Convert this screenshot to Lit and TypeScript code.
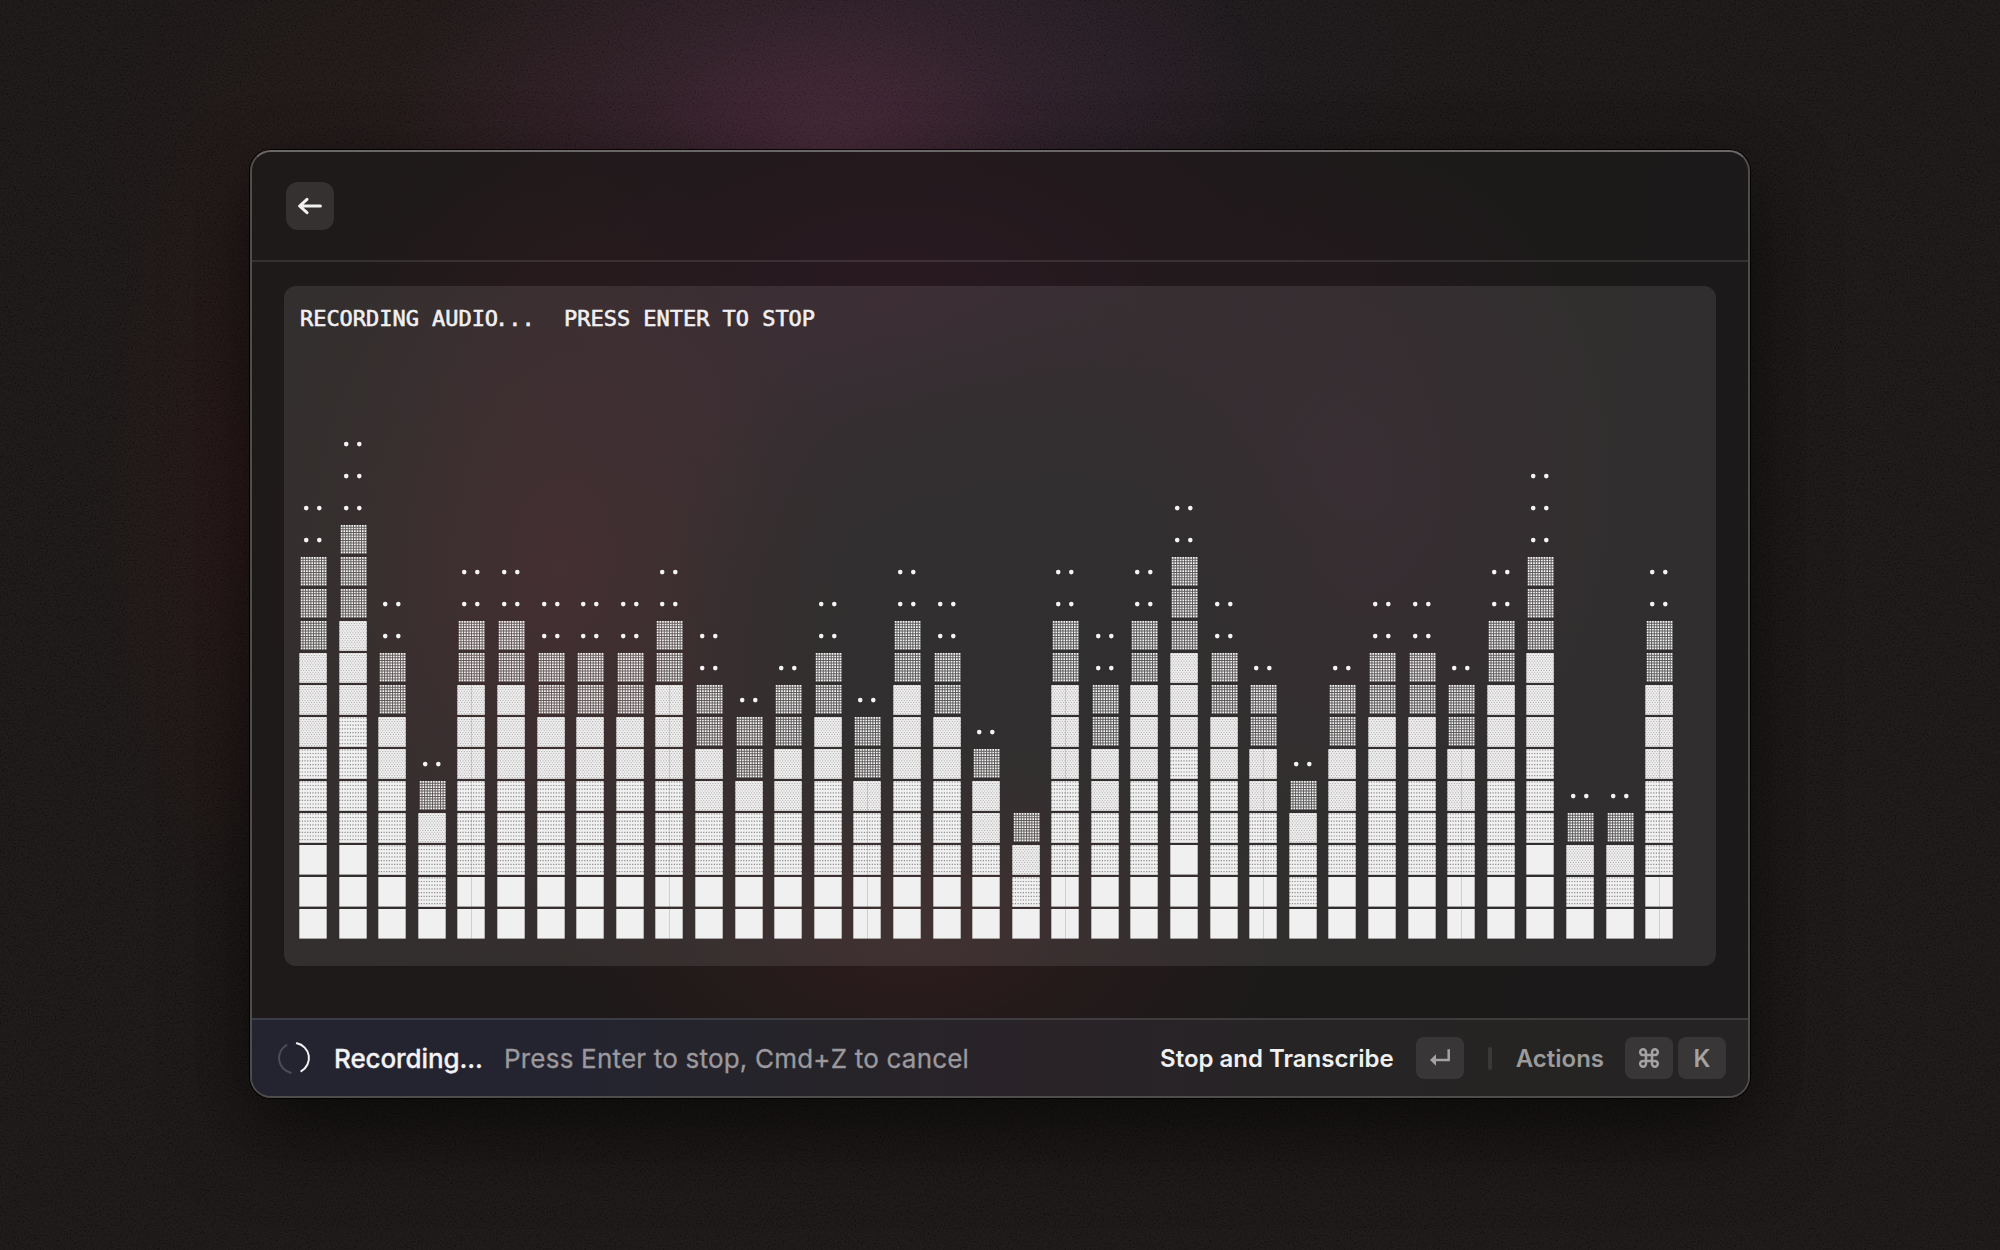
import { LitElement, html, css, svg, nothing } from "lit";
import { customElement, property } from "lit/decorators.js";

const LEVELS = [
  14, 16, 11, 6, 12, 12, 11, 11, 11, 12, 10, 8, 9, 11, 8, 12, 11, 7, 4, 12, 10,
  12, 14, 11, 9, 6, 9, 11, 11, 9, 12, 15, 5, 5, 12,
];

/** Shade of the cell at a height, counted from the bottom of its column. */
function shade(index: number, level: number): string {
  if (index < Math.ceil(level * 0.15)) return "full";
  if (index < Math.ceil(level * 0.4)) return "dense";
  if (index < Math.ceil(level * 0.6)) return "medium";
  if (index < Math.ceil(level * 0.8)) return "light";
  return "dots";
}

/** Path of small squares on a regular grid; odd rows are moved by `shift`. */
function dotGrid(
  x0: number, y0: number, x1: number, y1: number,
  dx: number, dy: number, size: number, shift = 0,
): string {
  let d = "";
  let row = 0;
  for (let y = y0; y < y1 - 0.5; y += dy, row++) {
    for (let x = x0 + (row % 2 ? shift : 0); x < x1 - 0.5; x += dx) {
      d += `M${x.toFixed(2)} ${y.toFixed(2)}h${size}v${size}h-${size}z`;
    }
  }
  return d;
}

const LIGHT = dotGrid(1.8, 0, 27.8, 29, 2.65, 2.65, 1.65);
const MEDIUM = dotGrid(0.2, 0.2, 27.8, 29.8, 2.65, 1.85, 1.1, 1.32);
const DENSE = dotGrid(0.2, 0.2, 27.8, 29.8, 2.65, 3.7, 1.2);

@customElement("level-column")
class LevelColumn extends LitElement {
  @property({ type: Number }) level = 0;
  @property({ type: Number }) seam = 0;

  static styles = css`
    :host {
      display: flex;
      flex-direction: column-reverse;
      width: 28px;
    }
    .cell {
      height: 30px;
      margin-bottom: 2px;
      flex: none;
    }
    svg {
      display: block;
    }
  `;

  render() {
    return Array.from({ length: this.level }, (_, i) => {
      const kind = shade(i, this.level);
      const seam =
        this.seam && kind !== "dots" && kind !== "light"
          ? svg`<rect x="14" y="0" width="1" height="30" fill="#5b5657" fill-opacity=${this.seam}/>`
          : nothing;
      return html`<div class="cell">
        <svg width="28" height="30" viewBox="0 0 28 30">${this.body(kind)}${seam}</svg>
      </div>`;
    });
  }

  private body(kind: string) {
    switch (kind) {
      case "dots":
        return svg`<circle cx="7.2" cy="15.1" r="2.3" fill="#f4f3f3"/><circle cx="20.3" cy="15.1" r="2.3" fill="#f4f3f3"/>`;
      case "light":
        return svg`<rect x="1.8" width="26" height="28.8" fill="#efeeee" fill-opacity=".24"/>
          <path d=${LIGHT} fill="#fbfafa" fill-opacity=".98"/>`;
      case "medium":
        return svg`<rect x="0.3" width="27.5" height="29.8" fill="#f3f2f2"/>
          <path d=${MEDIUM} fill="#4a4647" fill-opacity=".4"/>`;
      case "dense":
        return svg`<rect x="0.3" width="27.5" height="29.8" fill="#f1f0f0"/>
          <path d=${DENSE} fill="#4a4647" fill-opacity=".6"/>`;
      default:
        return svg`<rect x="0.3" width="27.4" height="29.6" fill="#f1f0f0"/>`;
    }
  }
}

@customElement("app-root")
class AppRoot extends LitElement {
  static styles = css`
    :host {
      display: block;
      font-family: Inter, "Liberation Sans", sans-serif;
    }
    .desktop {
      position: relative;
      width: 2000px;
      height: 1250px;
      overflow: hidden;
      display: flex;
      justify-content: center;
      box-sizing: border-box;
      padding-top: 150px;
      background:
        radial-gradient(440px 330px at 830px 150px, rgba(80, 42, 62, 0.76), rgba(68, 37, 57, 0.44) 45%, transparent),
        radial-gradient(360px 260px at 1130px 60px, rgba(34, 27, 44, 0.3), transparent),
        radial-gradient(380px 300px at 480px 170px, rgba(48, 24, 26, 0.4), transparent),
        radial-gradient(150px 420px at 250px 500px, rgba(52, 18, 20, 0.5), transparent),
        #171312;
    }
    .grain {
      position: absolute;
      inset: 0;
      opacity: 0.045;
    }
    .window {
      position: relative;
      width: 1500px;
      height: 948px;
      box-sizing: border-box;
      display: flex;
      flex-direction: column;
      border: 2px solid #4f4c4c;
      border-top-color: #6b6767;
      border-radius: 21px;
      overflow: hidden;
      background:
        radial-gradient(330px 300px at 760px 430px, rgba(27, 26, 26, 0.9), rgba(27, 26, 26, 0.65) 50%, transparent),
        radial-gradient(290px 420px at 310px 420px, rgba(52, 26, 29, 0.85), transparent),
        radial-gradient(360px 200px at 660px 780px, rgba(50, 28, 30, 0.8), transparent),
        radial-gradient(560px 330px at 650px 160px, rgba(43, 25, 34, 0.9), transparent),
        radial-gradient(250px 330px at 1110px 330px, rgba(43, 25, 34, 0.6), transparent),
        linear-gradient(100deg, #1e1a19, #1b1919);
      background-clip: padding-box;
      background-origin: border-box;
      box-shadow:
        0 0 0 1px rgba(0, 0, 0, 0.85),
        0 36px 80px rgba(0, 0, 0, 0.5),
        0 8px 60px rgba(0, 0, 0, 0.16);
    }
    .header {
      height: 110px;
      box-sizing: border-box;
      padding: 30px 0 0 34px;
      border-bottom: 2px solid rgba(255, 255, 255, 0.1);
      flex: none;
    }
    .back {
      width: 48px;
      height: 48px;
      border-radius: 12px;
      background: rgba(255, 255, 255, 0.1);
      display: flex;
      align-items: center;
      justify-content: center;
    }
    .content {
      flex: 1;
      padding: 24px 32px 0;
    }
    .panel {
      height: 680px;
      box-sizing: border-box;
      border-radius: 12px;
      background: rgba(255, 255, 255, 0.095);
      padding: 19px 16px 25px 15px;
      display: flex;
      flex-direction: column;
      justify-content: space-between;
    }
    .title {
      font: 22px/28px "DejaVu Sans Mono", monospace;
      letter-spacing: -0.04px;
      white-space: pre;
      color: #f1eff0;
      -webkit-text-stroke: 0.6px #f1eff0;
      padding-left: 1px;
    }
    .ellipsis {
      position: relative;
      left: -3px;
    }
    .levels {
      display: grid;
      grid-template-columns: repeat(35, 39.6px);
      align-items: end;
    }
    .footer {
      height: 78px;
      box-sizing: border-box;
      border-top: 2px solid rgba(255, 255, 255, 0.11);
      display: flex;
      align-items: center;
      padding: 0 22px 0 25px;
      background: linear-gradient(90deg, #242430, #242431 20%, #262429 38%, #292328 52%, #262425 72%, #252423 86%, #252324);
      flex: none;
      white-space: nowrap;
    }
    .status {
      margin-left: 23px;
      font-size: 26px;
      font-weight: 500;
      letter-spacing: -0.1px;
      color: #f3f2f4;
      width: 170px;
      -webkit-text-stroke: 0.3px #f3f2f4;
    }
    .hint {
      font-size: 26px;
      letter-spacing: 0.2px;
      color: #9b999d;
      -webkit-text-stroke: 0.3px #9b999d;
      flex: 1;
    }
    .action {
      font-size: 24px;
      font-weight: 600;
      color: #f1f0f1;
    }
    .muted {
      color: #9c9a9a;
    }
    .key {
      width: 48px;
      height: 42px;
      border-radius: 8px;
      background: #383637;
      color: #a4a2a2;
      display: flex;
      align-items: center;
      justify-content: center;
      font-size: 24px;
      font-weight: 600;
    }
    .enter {
      margin-left: 22px;
    }
    .divider {
      width: 4px;
      height: 23px;
      border-radius: 2px;
      background: #3a3838;
      margin: 0 24px;
    }
    .command {
      margin: 0 5px 0 21px;
    }
  `;

  render() {
    return html`<div class="desktop">
      <svg class="grain" width="2000" height="1250">
        <filter id="noise">
          <feTurbulence type="fractalNoise" baseFrequency="0.6" numOctaves="2" seed="4" />
          <feColorMatrix type="saturate" values="0" />
          <feComponentTransfer>
            <feFuncR type="linear" slope="2.8" intercept="-0.9" />
            <feFuncG type="linear" slope="2.8" intercept="-0.9" />
            <feFuncB type="linear" slope="2.8" intercept="-0.9" />
            <feFuncA type="linear" slope="0" intercept="1" />
          </feComponentTransfer>
        </filter>
        <rect width="2000" height="1250" filter="url(#noise)" />
      </svg>
      <div class="window">
        <div class="header">
          <div class="back">
            <svg width="28" height="24" viewBox="0 0 28 24" fill="none" stroke="#f2f1f1" stroke-width="3" stroke-linecap="round" stroke-linejoin="round">
              <path d="M24.4 12H3.6M11 5.3L3.6 12l7.4 6.7" />
            </svg>
          </div>
        </div>
        <div class="content">
          <div class="panel">
            <div class="title">RECORDING AUDIO<span class="ellipsis">...</span>  PRESS ENTER TO STOP</div>
            <div class="levels">
              ${LEVELS.map(
                (level, i) =>
                  html`<level-column .level=${level} .seam=${i % 5 === 4 ? 0.22 : 0}></level-column>`,
              )}
            </div>
          </div>
        </div>
        <div class="footer">
          <svg width="34" height="34" viewBox="0 0 34 34" fill="none" stroke-width="2" stroke-linecap="round">
            <path d="M19.8 2.3A15 15 0 0 1 24.3 30.1" stroke="#f4f3f5" />
            <path d="M13.8 31.7A15 15 0 0 1 9.4 4.1" stroke="#4d4c57" />
          </svg>
          <div class="status">Recording...</div>
          <div class="hint">Press Enter to stop, Cmd+Z to cancel</div>
          <div class="action">Stop and Transcribe</div>
          <div class="key enter">
            <svg width="24" height="20" viewBox="0 0 24 20">
              <path d="M20.7 1.3V12H7" fill="none" stroke="#a4a2a2" stroke-width="2.5" />
              <path d="M2 12L8 6.2V17.8Z" fill="#a4a2a2" />
            </svg>
          </div>
          <div class="divider"></div>
          <div class="action muted">Actions</div>
          <div class="key command">
            <svg width="22" height="22" viewBox="0 0 22 22" fill="none" stroke="#a4a2a2" stroke-width="2.5">
              <path d="M8 5.2A2.9 2.9 0 1 0 5.1 8.1H16.9A2.9 2.9 0 1 0 14 5.2V16.8A2.9 2.9 0 1 0 16.9 13.9H5.1A2.9 2.9 0 1 0 8 16.8Z" />
            </svg>
          </div>
          <div class="key">K</div>
        </div>
      </div>
    </div>`;
  }
}
